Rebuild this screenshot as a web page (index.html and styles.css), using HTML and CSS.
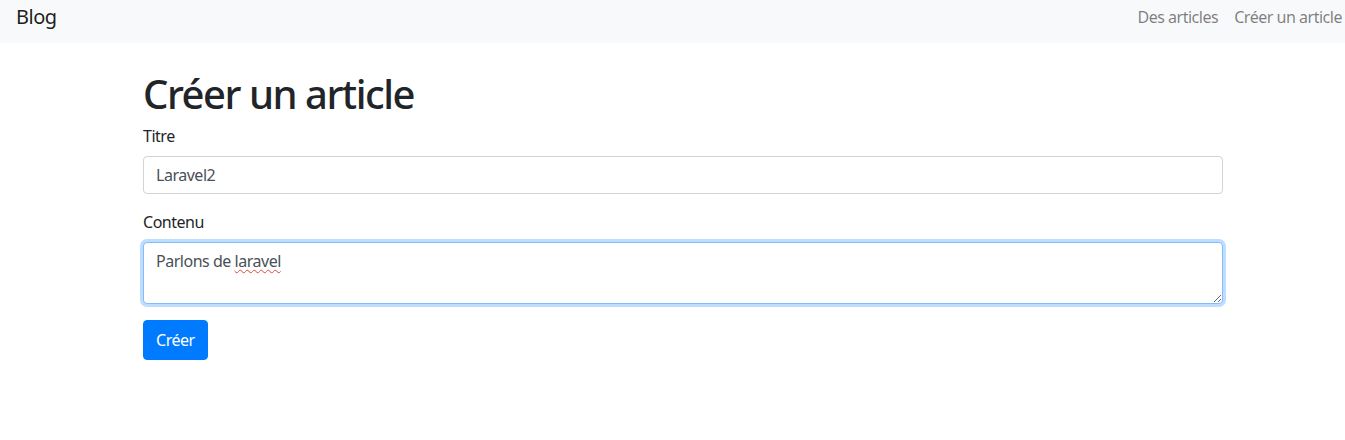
FILE: index.html
```html
<!DOCTYPE html>
<html lang="fr">
<head>
<meta charset="utf-8">
<title>Blog</title>
<link rel="stylesheet" href="styles.css">
</head>
<body>
<nav class="navbar">
  <a class="brand" href="#">Blog</a>
  <ul class="nav-links">
    <li><a href="#">Des articles</a></li>
    <li><a href="#">Créer un article</a></li>
  </ul>
</nav>
<main class="container">
  <h1 class="title">Créer un article</h1>
  <form class="form">
    <div class="form-group">
      <label class="label" for="titre">Titre</label>
      <input class="control" id="titre" type="text" value="Laravel2">
    </div>
    <div class="form-group">
      <label class="label">Contenu</label>
      <div class="control textarea focused" role="textbox" aria-multiline="true">Parlons de <span class="misspelled">laravel</span></div>
    </div>
    <button type="button" class="btn">Créer</button>
  </form>
</main>
</body>
</html>
```
FILE: styles.css
```css
* { box-sizing: border-box; }
html, body { margin: 0; padding: 0; }
body {
  font-family: "Noto Sans", "Open Sans", sans-serif;
  font-size: 16px;
  line-height: 1.5;
  letter-spacing: -0.03em;
  color: #212529;
  background: #fff;
}
.navbar {
  display: flex;
  align-items: center;
  justify-content: space-between;
  height: 43px;
  padding: 0 3px 0 16px;
  background: #f8f9fa;
}
.brand {
  font-size: 20px;
  line-height: 30px;
  color: rgba(0,0,0,.9);
  text-decoration: none;
  margin-top: -10px;
}
.nav-links {
  display: flex;
  list-style: none;
  margin: -10px 0 0 0;
  padding: 0;
  gap: 16px;
}
.nav-links a {
  color: rgba(0,0,0,.5);
  text-decoration: none;
  line-height: 24px;
}
.container {
  width: 1080px;
  margin-left: 143px;
  padding-top: 25px;
}
.title {
  margin: 0 0 6px;
  padding-top: 2px;
  font-size: 40px;
  line-height: 48px;
  font-weight: 500;
  letter-spacing: -0.037em;
}
.form-group { margin-bottom: 16px; }
.label {
  display: block;
  margin-bottom: 8px;
  line-height: 24px;
}
.control {
  display: block;
  width: 100%;
  height: 38px;
  padding: 6px 12px;
  font: inherit;
  font-size: 16px;
  line-height: 24px;
  letter-spacing: -0.03em;
  color: #495057;
  background: #fff;
  border: 1px solid #ced4da;
  border-radius: 4px;
}
.textarea {
  height: 62px;
  resize: vertical;
  overflow: auto;
}
.focused {
  border-color: #80bdff;
  box-shadow: 0 0 0 3px rgba(0,123,255,.25);
}
.misspelled {
  text-decoration: underline wavy #e0443e;
  text-decoration-thickness: 1px;
  text-underline-offset: 2px;
}
.btn {
  display: inline-block;
  padding: 7px 12px;
  font: inherit;
  line-height: 24px;
  letter-spacing: -0.03em;
  color: #fff;
  background: #007bff;
  border: 1px solid #007bff;
  border-radius: 4px;
}
```
